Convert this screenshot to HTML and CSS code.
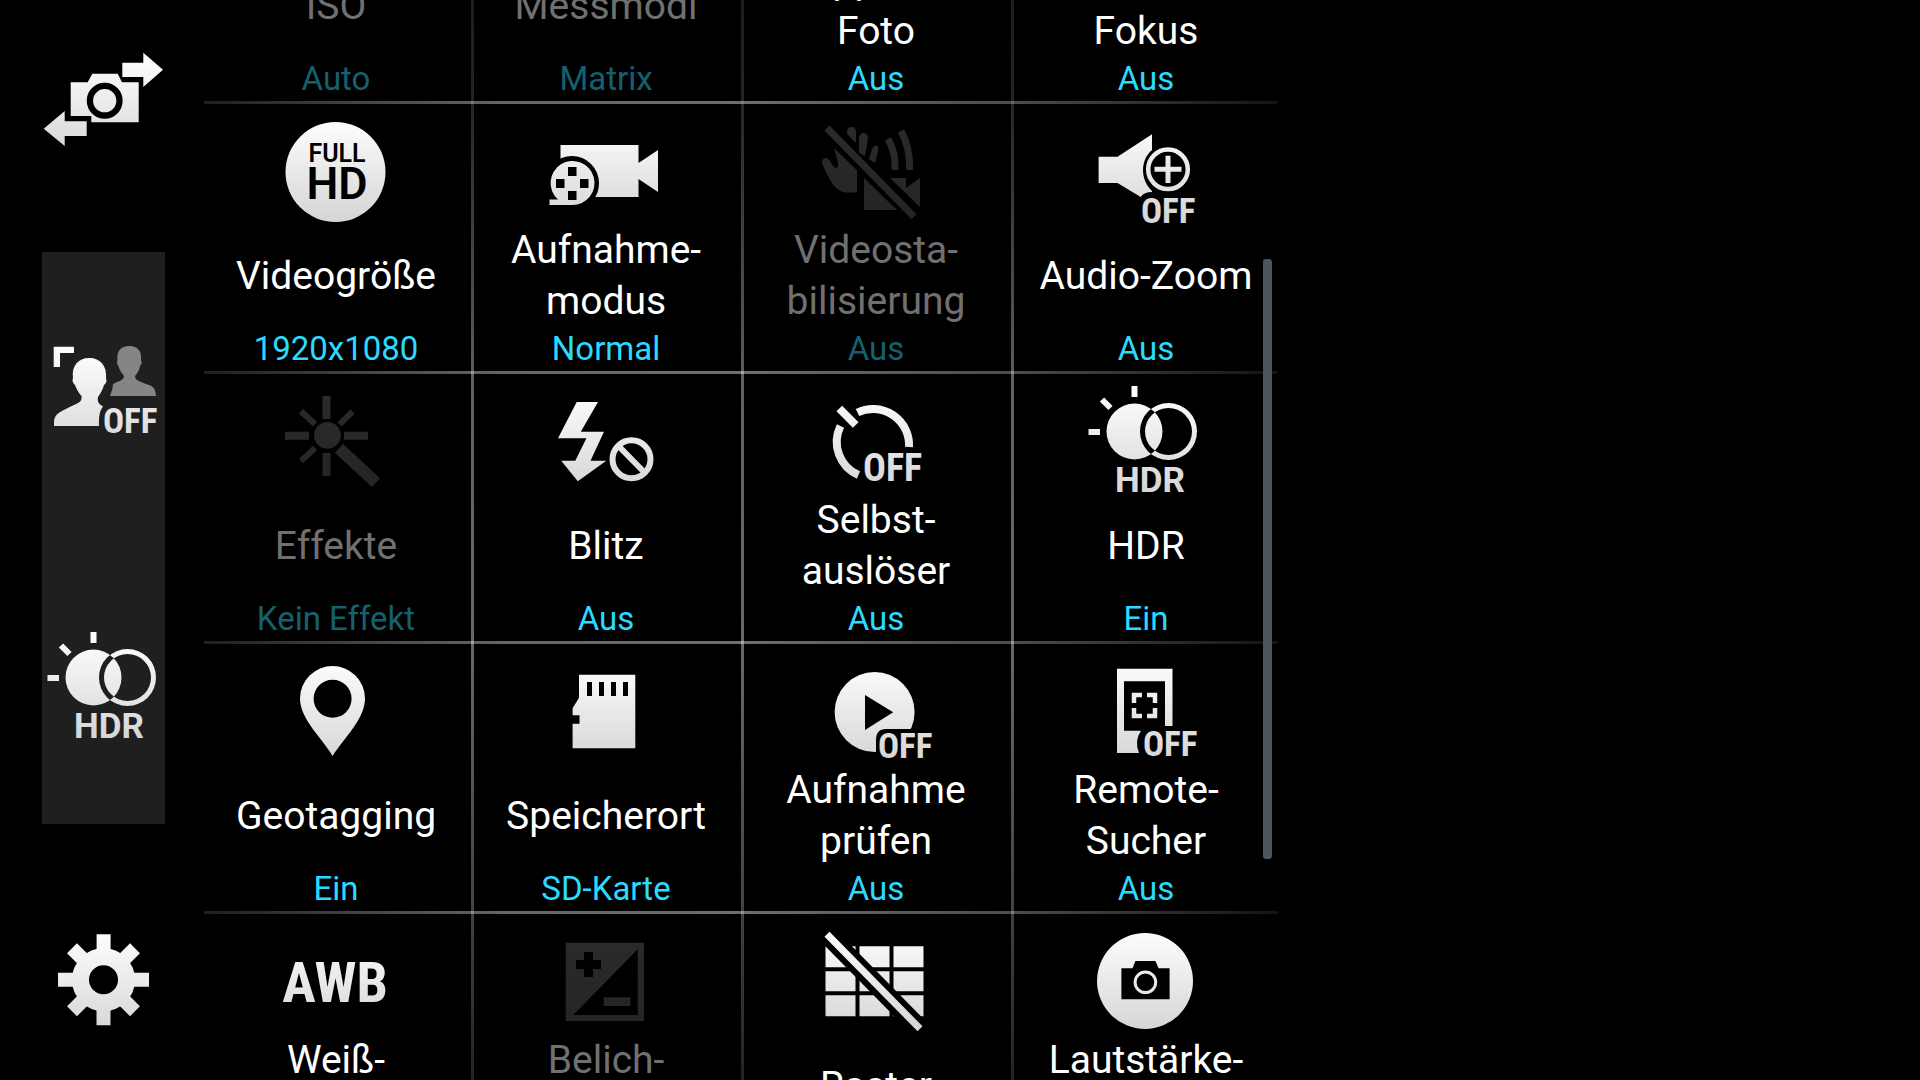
FILE: index.html
```html
<!DOCTYPE html>
<html lang="de">
<head>
<meta charset="utf-8">
<meta name="viewport" content="width=device-width, initial-scale=1">
<title>Kamera – Einstellungen</title>
<link rel="stylesheet" href="styles.css">
</head>
<body>
<svg class="defs" aria-hidden="true">
  <defs>
    <linearGradient id="metal" gradientUnits="userSpaceOnUse" x1="0" y1="20" x2="0" y2="115">
      <stop offset="0" stop-color="#fcfcfc"/>
      <stop offset="1" stop-color="#d6d6d6"/>
    </linearGradient>
    <symbol id="hdr" viewBox="0 0 123 120" overflow="visible">
      <path fill="url(#metal)" fill-rule="evenodd" d="M23.5 56.5a28 28 0 1 0 56 0a28 28 0 1 0-56 0ZM57 56.5a28.500 28.500 0 1 0 57 0a28.500 28.500 0 1 0-57 0ZM62 56.500a23.500 23.500 0 1 0 47 0a23.500 23.500 0 1 0-47 0Z"/>
      <path class="line" stroke-width="6" d="M51.500 11v11M5.500 57h11.500M19 24.500l8.500 8.500"/>
      <text class="glyph wide" x="32" y="117" font-size="35">HDR</text>
    </symbol>
  </defs>
</svg>

<main class="camera">
  <nav class="sidebar" aria-label="Schnellzugriff">
    <button class="quick" type="button" aria-label="Kamera wechseln">
      <svg class="quick-icon" viewBox="0 0 123 120">
        <g fill="url(#metal)">
          <path d="M28.700 42.300H45.700L50.300 33.700H75.700L80 42.300H96.700V82.300H49.300V76H28.700Z"/>
          <path d="M80.300 22.700H101.300V12.700L121 29.700L101.300 47V37H80.300Z"/>
          <path d="M44.700 81.300H22.700V71L1.700 88.700L22.700 106V96H44.700Z"/>
        </g>
        <circle cx="62.700" cy="60.700" r="14.800" fill="none" stroke="#000" stroke-width="6.300"/>
      </svg>
    </button>
    <div class="shortcuts">
      <button class="quick shortcut" type="button" aria-label="Selektiver Fokus aus">
        <svg class="quick-icon" viewBox="0 0 123 120">
          <path fill="url(#metal)" d="M11.700 11.700H32V18H18V32H11.700Z"/>
          <path fill="url(#metal)" d="M12 91V87C12 78 20 76 32 70C38 67.500 40 66 39.500 61C36.500 58 34 53 33 50C30.500 48 30 45 31 43C29.500 31 36 23 47.300 23S65 31 64 43C65 46 64.500 48 62 50C61 54 58 59 56 62C55 67 57 69 61 71.500C57 77 57 82 57 91Z"/>
          <path fill="#858585" d="M68 61C69 57 71 54 71 49C77 46 82 45 82 41C79 37 77 34 76.500 31C74.500 29 75 27 75.500 25C74.500 16 79 11 87.300 11S100 16 99 25C100 27 100 29 98 31C97.500 34 96 38 93 41C93 45 97 46 104 49C111 51 113.500 53 114 61Z"/>
          <text class="glyph" x="61" y="98" font-size="35">OFF</text>
        </svg>
      </button>
      <button class="quick shortcut" type="button" aria-label="HDR">
        <svg class="quick-icon" viewBox="0 0 123 120"><use href="#hdr" width="123" height="120"/></svg>
      </button>
    </div>
    <button class="quick" type="button" aria-label="Einstellungen">
      <svg class="quick-icon" viewBox="0 -1 123 120">
        <g fill="none" stroke="url(#metal)">
          <circle cx="61.500" cy="62.700" r="23" stroke-width="17"/>
          <path stroke-width="14" d="M61.600 17.200V34M61.500 91V108.200M16 62.700H34M89 62.701H107M30 31.200L42 43.200M81 82.200L93 94.200M93 31.200L81 43.200M42 82.200L30 94.200"/>
        </g>
      </svg>
    </button>
  </nav>

  <section class="panel" aria-label="Kameraeinstellungen">
    <div class="rows">
      <div class="row row-1">
        <button class="tile" type="button" disabled>
          <span class="icon"></span><span class="label">ISO</span><span class="value">Auto</span>
        </button>
        <button class="tile" type="button" disabled>
          <span class="icon"></span><span class="label">Messmodi</span><span class="value">Matrix</span>
        </button>
        <button class="tile" type="button">
          <span class="icon"></span><span class="label">Tippen f.<br>Foto</span><span class="value">Aus</span>
        </button>
        <button class="tile" type="button">
          <span class="icon"></span><span class="label">Selektiver<br>Fokus</span><span class="value">Aus</span>
        </button>
      </div>

      <div class="row row-2">
        <button class="tile" type="button">
          <svg class="icon" viewBox="0 0 270 120">
            <circle cx="134.500" cy="68" r="50" fill="url(#metal)"/>
            <text class="cut" x="136" y="58" font-size="25">FULL</text>
            <text class="cut" x="136" y="95" font-size="45">HD</text>
          </svg>
          <span class="label">Videogröße</span><span class="value">1920x1080</span>
        </button>
        <button class="tile" type="button">
          <svg class="icon" viewBox="0 0 270 120">
            <path fill="url(#metal)" d="M89.500 41H167.500V59L187 46V88L167.500 75V93H89.500Z"/>
            <path d="M74 79a27 27 0 0 1 54 0q0 9-5 16v9H74Z"/>
            <path fill="url(#metal)" d="M78.500 101V95.500H87A22 22 0 1 1 101 101Z"/>
            <path d="M97 63h8.500v9H97ZM97 87h8.500v9H97ZM85 75h8.500v9H85ZM109 75h8.500v9H109Z"/>
          </svg>
          <span class="label">Aufnahme-<br>modus</span><span class="value">Normal</span>
        </button>
        <button class="tile" type="button" disabled>
          <svg class="icon" viewBox="0 0 270 120">
            <g fill="url(#metal)">
              <path d="M93 44L116 66.500V88.500H104Q97 87 92.500 81C87 73 84 66 81 59Q81 54 85 54C89 54 90 61 94.500 64Q98 64 97 59Z"/>
              <path d="M106 28Q106 23 110.500 23T115 28V39L106 30ZM118 49V34Q119 29 123 29T127 35L124 52ZM128 55L131 45Q133 41 135.500 41.500T137 47L134 59Q132 58 128 55Z"/>
              <path d="M123 74L156 106H123ZM149 74H165V84L179 74V103Z"/>
            </g>
            <path class="line" stroke-width="7" d="M147 35Q155 49 154 66M160 27Q169.500 44 168.500 66M86 24L173 112.700"/>
          </svg>
          <span class="label">Videosta-<br>bilisierung</span><span class="value">Aus</span>
        </button>
        <button class="tile" type="button">
          <svg class="icon" viewBox="0 0 270 120">
            <path fill="url(#metal)" d="M87.600 52.700H106.500L141 30.300V46C129 56 129 76 141 87V88Q133 88 129.700 93L106.500 79H87.600Z"/>
            <circle class="line" cx="157" cy="65.300" r="19.800" stroke-width="4.500"/>
            <path class="line" stroke-width="5" d="M143.500 65.300H170.500M157 51.700V79"/>
            <text class="glyph" x="130" y="119" font-size="35">OFF</text>
          </svg>
          <span class="label">Audio-Zoom</span><span class="value">Aus</span>
        </button>
      </div>

      <div class="row row-3">
        <button class="tile" type="button" disabled>
          <svg class="icon" viewBox="0 0 270 120">
            <circle cx="126.400" cy="61.300" r="13.400" fill="url(#metal)"/>
            <path class="line" stroke-width="8" d="M125.500 22V45M125.500 79V102M84 61.800H108M143 61.800H167"/>
            <path class="line" stroke-width="6" d="M100 37.300L114 50.300M151.500 37.700L138.500 50.300M100 87L114 74"/>
            <path class="line" stroke-width="12" d="M138 74.300L175 108.700"/>
          </svg>
          <span class="label">Effekte</span><span class="value">Kein Effekt</span>
        </button>
        <button class="tile" type="button">
          <svg class="icon" viewBox="0 0 270 120">
            <path fill="url(#metal)" d="M105.700 28H127L109.800 57.700H133L119.500 86.700H135.300L106.800 107.300L90.200 86.700H104.300L115.400 64.300H87Z"/>
            <circle class="line" cx="160.500" cy="85.300" r="19" stroke-width="6"/>
            <path class="line" stroke-width="6" d="M147 71.500L174 99"/>
          </svg>
          <span class="label">Blitz</span><span class="value">Aus</span>
        </button>
        <button class="tile" type="button">
          <svg class="icon" viewBox="0 0 270 120">
            <path class="line" stroke-width="8" d="M116.500 38.500A36 36 0 0 1 168 73M99.500 52A36 36 0 0 0 117.500 101"/>
            <path class="line" stroke-width="8" d="M98.300 34.500L114.700 51"/>
            <text class="glyph" x="122" y="107" font-size="38">OFF</text>
          </svg>
          <span class="label">Selbst-<br>auslöser</span><span class="value">Aus</span>
        </button>
        <button class="tile" type="button">
          <svg class="icon" viewBox="0 0 270 120"><use href="#hdr" x="72" y="1" width="123" height="120"/></svg>
          <span class="label">HDR</span><span class="value">Ein</span>
        </button>
      </div>

      <div class="row row-4">
        <button class="tile" type="button">
          <svg class="icon" viewBox="0 0 270 120">
            <path fill="url(#metal)" fill-rule="evenodd" d="M131.600 112C121 94 99 75 99 54.500A32.500 32.500 0 0 1 164 54.500C164 75 143 94 131.600 112ZM112.600 54.700a19 19 0 1 0 38 0a19 19 0 1 0-38 0Z"/>
          </svg>
          <span class="label">Geotagging</span><span class="value">Ein</span>
        </button>
        <button class="tile" type="button">
          <svg class="icon" viewBox="0 0 270 120">
            <path fill="url(#metal)" d="M108 30.700H164.300V104.300H101.600V79.700H108.500V71.300H101.600V64.300L108 53.700Z"/>
            <path d="M116 38h5v14h-5ZM128 38h5v14h-5ZM140 38h5v14h-5ZM152 38h5v14h-5Z"/>
          </svg>
          <span class="label">Speicherort</span><span class="value">SD-Karte</span>
        </button>
        <button class="tile" type="button">
          <svg class="icon" viewBox="0 0 270 120">
            <circle cx="133.600" cy="68" r="40" fill="url(#metal)"/>
            <path d="M124 51L152.200 68.300L124 86ZM135 118V96Q135 85 145 85H192V118Z"/>
            <text class="glyph" x="137" y="114" font-size="35">OFF</text>
          </svg>
          <span class="label">Aufnahme<br>prüfen</span><span class="value">Aus</span>
        </button>
        <button class="tile" type="button">
          <svg class="icon" viewBox="0 0 270 120">
            <path fill="url(#metal)" d="M106 24.700H161.500V82H154V37.300H113V86.700H130Q123 97 128 109H106Z"/>
            <path class="line" stroke-width="4.500" d="M123 59V51H131M136 51H144V59M144 64V72H136M131 72H123V64"/>
            <text class="glyph" x="132" y="112" font-size="35">OFF</text>
          </svg>
          <span class="label">Remote-<br>Sucher</span><span class="value">Aus</span>
        </button>
      </div>

      <div class="row row-5">
        <button class="tile" type="button">
          <svg class="icon" viewBox="0 0 270 120">
            <text class="glyph middle" x="134" y="88" font-size="56">AWB</text>
          </svg>
          <span class="label">Weiß-<br>abgleich</span><span class="value">Auto</span>
        </button>
        <button class="tile" type="button" disabled>
          <svg class="icon" viewBox="0 0 270 120">
            <path fill="url(#metal)" fill-rule="evenodd" d="M94.700 28.700H173V107H94.700ZM166.700 35.300V101H102.300ZM113 38H122V46H130V55H122V63H113V55H105V46H113Z"/>
            <path fill="url(#metal)" d="M132.600 83.300H159.400V92H132.600Z"/>
          </svg>
          <span class="label">Belich-<br>tungswert</span><span class="value">0</span>
        </button>
        <button class="tile" type="button">
          <svg class="icon" viewBox="0 0 270 120">
            <path fill="url(#metal)" d="M84.500 32.300h30v21h-30ZM118.500 32.300h30v21h-30ZM152.500 32.300h30v21h-30ZM84.500 57.300h30v20h-30ZM118.500 57.300h30v20h-30ZM152.500 57.300h30v20h-30ZM84.500 81.300h30v21h-30ZM118.500 81.300h30v21h-30ZM152.500 81.300h30v21h-30Z"/>
            <path stroke="#000" stroke-width="19" d="M86 20.300L186 122"/>
            <path class="line" stroke-width="7" d="M86 20.300L179 114.700"/>
          </svg>
          <span class="label">Raster</span><span class="value">Aus</span>
        </button>
        <button class="tile" type="button">
          <svg class="icon" viewBox="0 0 270 120">
            <circle cx="134" cy="67" r="48" fill="url(#metal)"/>
            <path d="M110.400 54.300H121.500L124.400 47H144.400L147.600 54.300H158.600V85.300H110.400Z"/>
            <circle class="line" cx="134.400" cy="68.300" r="10.300" stroke-width="3"/>
          </svg>
          <span class="label">Lautstärke-<br>taste</span><span class="value">Aufnahme</span>
        </button>
      </div>
    </div>
    <div class="scrollbar"></div>
  </section>
</main>
</body>
</html>
```
FILE: styles.css
```css
* {
  box-sizing: border-box;
}

body {
  margin: 0;
  background: #000;
  color: #fff;
  font-family: Roboto, "Noto Sans", sans-serif;
}

button {
  margin: 0;
  padding: 0;
  border: 0;
  background: none;
  color: inherit;
  font: inherit;
}

svg {
  display: block;
}

.defs {
  position: absolute;
  width: 0;
  height: 0;
}

.camera {
  display: flex;
  height: 100vh;
  overflow: hidden;
}

/* Quick access bar */

.sidebar {
  display: flex;
  flex: none;
  flex-direction: column;
  justify-content: space-between;
  padding: 40px 36px 44px 42px;
}

.quick {
  display: flex;
  align-items: center;
  justify-content: center;
}

.quick-icon {
  width: 123px;
  height: 120px;
}

.shortcuts {
  background: #1f1f1f;
}

.shortcut {
  height: 286px;
}

/* Settings grid */

.panel {
  position: relative;
  flex: 0 1 1080px;
  overflow: hidden;
}

.rows {
  margin-top: -166px;
}

.row {
  position: relative;
  display: grid;
  grid-template-columns: repeat(4, 1fr);
}

.row::after {
  content: "";
  position: absolute;
  right: 3px;
  bottom: 0;
  left: 3px;
  height: 3px;
  background: linear-gradient(90deg, rgba(255, 255, 255, 0.12), rgba(255, 255, 255, 0.4) 28%, rgba(255, 255, 255, 0.43) 50%, rgba(255, 255, 255, 0.3) 75%, rgba(255, 255, 255, 0.08));
}

.row-1 { --from: #151515; --to: #242424; }
.row-2 { --from: #262626; --to: #5c5c5c; }
.row-3 { --from: #606060; --to: #686868; }
.row-4 { --from: #686868; --to: #424242; }
.row-5 { --from: #424242; --to: #101010; }

.tile {
  display: flex;
  flex-direction: column;
  align-items: center;
  padding-bottom: 3px;
}

.tile + .tile {
  background: linear-gradient(var(--from), var(--to)) left / 3px 100% no-repeat;
}

.icon {
  width: 270px;
  max-width: 100%;
  height: 120px;
}

.label {
  display: flex;
  align-items: center;
  height: 102px;
  padding-top: 2px;
  font-size: 39px;
  line-height: 51px;
}

.value {
  color: #2bdaff;
  font-size: 33px;
  line-height: 45px;
}

.tile:disabled .icon {
  opacity: 0.17;
}

.tile:disabled .label {
  color: #707070;
}

.tile:disabled .value {
  color: #15606f;
}

.scrollbar {
  position: absolute;
  top: 24%;
  right: 9px;
  width: 9px;
  height: 55.5%;
  border-radius: 3px;
  background: #4c565f;
}

/* Icon parts */

.line {
  fill: none;
  stroke: url(#metal);
}

.glyph {
  fill: url(#metal);
  font-family: "Roboto Condensed", "Liberation Sans Narrow", Roboto, sans-serif;
  font-weight: 700;
}

.wide {
  font-family: Roboto, sans-serif;
}

.cut {
  fill: #000;
  font-family: Roboto, sans-serif;
  font-weight: 600;
  text-anchor: middle;
}

.middle {
  text-anchor: middle;
}
```
